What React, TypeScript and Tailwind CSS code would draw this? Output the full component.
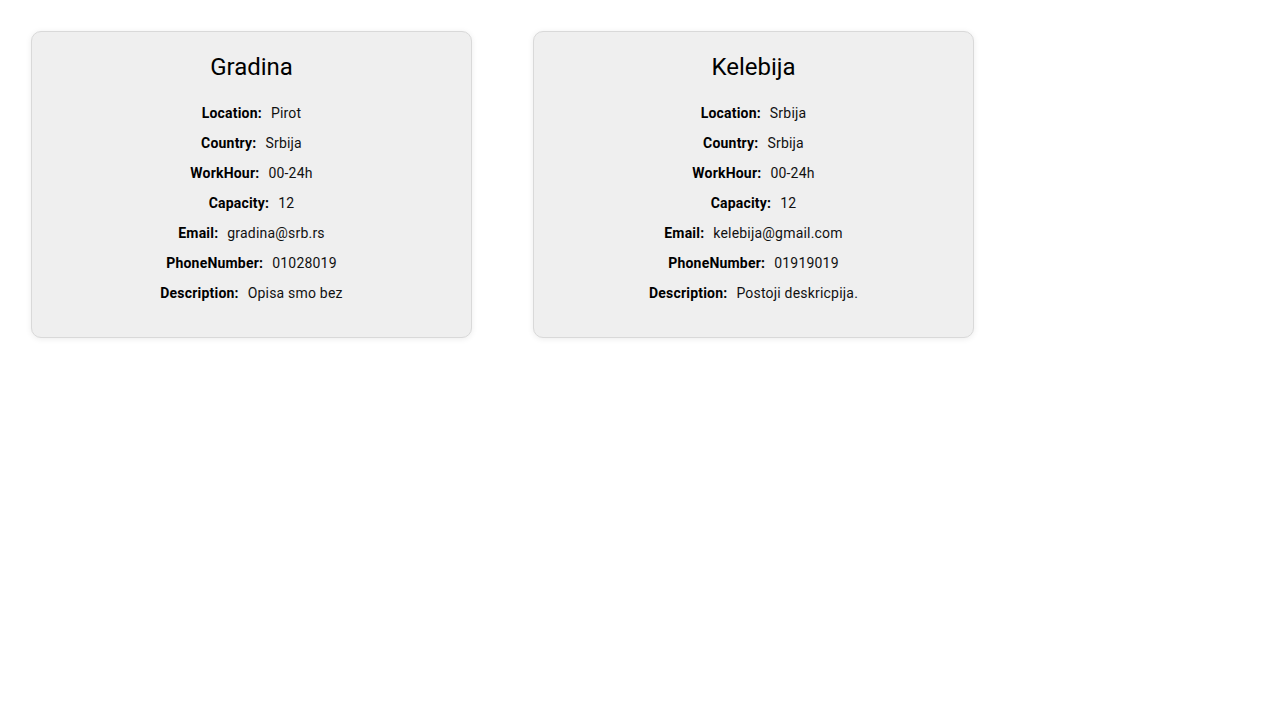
const places = [
  {
    name: "Gradina",
    fields: [
      ["Location", "Pirot"],
      ["Country", "Srbija"],
      ["WorkHour", "00-24h"],
      ["Capacity", "12"],
      ["Email", "gradina@srb.rs"],
      ["PhoneNumber", "01028019"],
      ["Description", "Opisa smo bez"],
    ],
  },
  {
    name: "Kelebija",
    fields: [
      ["Location", "Srbija"],
      ["Country", "Srbija"],
      ["WorkHour", "00-24h"],
      ["Capacity", "12"],
      ["Email", "kelebija@gmail.com"],
      ["PhoneNumber", "01919019"],
      ["Description", "Postoji deskricpija."],
    ],
  },
];

export default function App() {
  return (
    <div className="min-h-screen bg-white font-['Roboto',sans-serif] text-black">
      <div className="flex gap-[61px] pl-[31px] pt-[31px]">
        {places.map((place) => (
          <div
            key={place.name}
            className="w-[441px] rounded-[10px] border border-[#d9d9d9] bg-[#efefef] pt-[19px] pb-[29px] shadow-[0_1px_6px_rgba(0,0,0,0.08)]"
          >
            <h2 className="text-center text-2xl leading-8 mb-[15px]">{place.name}</h2>
            <div className="flex flex-col">
              {place.fields.map(([label, value]) => (
                <div key={label} className="flex justify-center text-sm leading-[30px] tracking-[0.2px]">
                  <span className="font-bold mr-[9px]">{label}:</span>
                  <span className="text-[#111]">{value}</span>
                </div>
              ))}
            </div>
          </div>
        ))}
      </div>
    </div>
  );
}
